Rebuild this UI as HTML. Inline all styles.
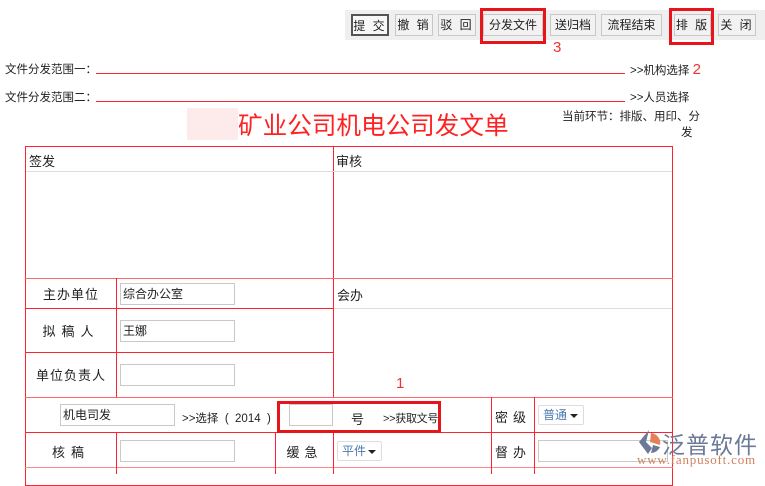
<!DOCTYPE html>
<html><head><meta charset="utf-8"><style>
*{margin:0;padding:0;box-sizing:border-box}
body{width:765px;height:474px;overflow:hidden;background:#fff;position:relative;font-family:"Liberation Sans","Noto Sans CJK SC",sans-serif;font-size:12px;color:#222}
.a{position:absolute;white-space:nowrap}
.btn{position:absolute;top:14px;height:22px;border:1px solid #c8c8c8;background:#f2f2f2;font-size:12px;text-align:center;line-height:20px;letter-spacing:2px}
.rb{position:absolute;border:3px solid #e8141c}
.hl{position:absolute;height:1px;background:#f23}
.vl{position:absolute;width:1px;background:#f23}
.inp{position:absolute;height:22px;border:1px solid #c9c9c9;background:#fff;font-size:12px;line-height:20px;padding-left:2px}
.lab{position:absolute;font-size:13px;text-align:center;letter-spacing:1px}
.sel{position:absolute;height:20px;border:1px solid #ddd;border-radius:2px;color:#4a78b0;font-size:12px;line-height:18px;padding-left:4px}
.sel:after{content:"";position:absolute;right:5px;top:8px;border:4px solid transparent;border-top:4px solid #222;border-bottom:0}
</style></head><body>
<div class="a" style="left:345px;top:10px;width:420px;height:30px;background:#efefef"></div>
<div class="btn" style="left:351px;width:38px;border:2px solid #555;background:#f7f7f7">提 交</div>
<div class="btn" style="left:395px;width:38px">撤 销</div>
<div class="btn" style="left:438px;width:38px">驳 回</div>
<div class="btn" style="left:483px;width:60px;letter-spacing:0">分发文件</div>
<div class="btn" style="left:550px;width:46px;letter-spacing:0">送归档</div>
<div class="btn" style="left:601px;width:61px;letter-spacing:0">流程结束</div>
<div class="btn" style="left:674px;width:37px">排 版</div>
<div class="btn" style="left:718px;width:38px">关 闭</div>
<div class="rb" style="left:480px;top:8px;width:66px;height:36px"></div>
<div class="rb" style="left:669px;top:8px;width:45px;height:37px"></div>
<div class="a" style="left:553px;top:39px;color:#e33;font-size:15px">3</div>

<div class="a" style="left:5px;top:61px;font-size:11.5px">文件分发范围一：</div>
<div class="hl" style="left:96px;top:73px;width:529px"></div>
<div class="a" style="left:630px;top:61px;font-size:11.5px">&gt;&gt;机构选择 <span style="color:#e33;font-size:15px">2</span></div>
<div class="a" style="left:5px;top:89px;font-size:11.5px">文件分发范围二：</div>
<div class="hl" style="left:96px;top:101px;width:529px"></div>
<div class="a" style="left:630px;top:89px;font-size:11.5px">&gt;&gt;人员选择</div>
<div class="a" style="left:187px;top:108px;width:51px;height:32px;background:#fdeaea"></div>
<div class="a" style="left:238px;top:106px;color:#f22;font-size:24.6px">矿业公司机电公司发文单</div>
<div class="a" style="left:562px;top:108px;font-size:11.5px">当前环节：排版、用印、分</div>
<div class="a" style="left:681px;top:124px;font-size:11.5px">发</div>

<div class="a" style="left:25px;top:146px;width:648px;height:340px;border:1px solid #f23"></div>
<div class="vl" style="left:333px;top:146px;height:251px"></div>
<div class="a" style="left:26px;top:171px;width:646px;height:1px;background:#ddd"></div>
<div class="a" style="left:29px;top:151px;font-size:13px">签发</div>
<div class="a" style="left:336px;top:151px;font-size:13px">审核</div>
<div class="hl" style="left:25px;top:278px;width:648px;background:#f66"></div>
<div class="hl" style="left:25px;top:308px;width:308px"></div>
<div class="a" style="left:334px;top:308px;width:338px;height:1px;background:#ddd"></div>
<div class="hl" style="left:25px;top:352px;width:308px"></div>
<div class="hl" style="left:25px;top:397px;width:648px;background:#f66"></div>
<div class="hl" style="left:25px;top:432px;width:648px"></div>
<div class="hl" style="left:25px;top:467px;width:648px;background:#f88"></div>
<div class="vl" style="left:116px;top:278px;height:119px"></div>
<div class="vl" style="left:116px;top:432px;height:42px"></div>
<div class="vl" style="left:275px;top:432px;height:42px"></div>
<div class="vl" style="left:333px;top:432px;height:42px"></div>
<div class="vl" style="left:491px;top:397px;height:77px"></div>
<div class="vl" style="left:534px;top:397px;height:77px"></div>

<div class="lab" style="left:26px;top:284px;width:90px">主办单位</div>
<div class="inp" style="left:120px;top:283px;width:115px">综合办公室</div>
<div class="a" style="left:337px;top:285px;font-size:13px">会办</div>
<div class="lab" style="left:26px;top:321px;width:90px;letter-spacing:6px">拟稿人</div>
<div class="inp" style="left:120px;top:320px;width:115px">王娜</div>
<div class="lab" style="left:26px;top:365px;width:90px">单位负责人</div>
<div class="inp" style="left:120px;top:364px;width:115px"></div>
<div class="a" style="left:396px;top:375px;color:#e33;font-size:15px">1</div>

<div class="inp" style="left:60px;top:404px;width:115px">机电司发</div>
<div class="a" style="left:182px;top:410px;font-size:11.5px">&gt;&gt;选择 &nbsp;( &nbsp;2014 &nbsp;)</div>
<div class="rb" style="left:277px;top:401px;width:164px;height:32px"></div>
<div class="inp" style="left:289px;top:404px;width:44px"></div>
<div class="a" style="left:351px;top:409px;font-size:13px">号</div>
<div class="a" style="left:383px;top:410px;font-size:11px;letter-spacing:-0.3px">&gt;&gt;获取文号</div>
<div class="lab" style="left:492px;top:407px;width:42px;letter-spacing:5px">密级</div>
<div class="sel" style="left:538px;top:405px;width:46px">普通</div>

<div class="lab" style="left:26px;top:442px;width:90px;letter-spacing:6px">核稿</div>
<div class="inp" style="left:120px;top:440px;width:115px"></div>
<div class="lab" style="left:276px;top:442px;width:57px;letter-spacing:5px">缓急</div>
<div class="sel" style="left:337px;top:441px;width:45px">平件</div>
<div class="lab" style="left:492px;top:442px;width:42px;letter-spacing:5px">督办</div>
<div class="inp" style="left:538px;top:440px;width:130px"></div>

<svg class="a" style="left:636px;top:429px" width="26" height="26" viewBox="0 0 26 26"><path d="M13 1 L3 13 L12 25 L16 19 L10 13 Z" fill="#6b7896"/><path d="M15 4 A10 10 0 0 1 24 16 L14 13 Z" fill="#e3825a"/><path d="M17 16 L24 18 A10 10 0 0 1 15 24 Z" fill="#6b7896"/></svg>
<div class="a" style="left:662px;top:426px;font-size:23px;color:#6b7896;letter-spacing:1px">泛普软件</div>
<div class="a" style="left:637px;top:452px;font-family:'Liberation Serif',serif;font-size:13px;color:#d0805e;letter-spacing:0.8px">www.fanpusoft.com</div>
</body></html>
